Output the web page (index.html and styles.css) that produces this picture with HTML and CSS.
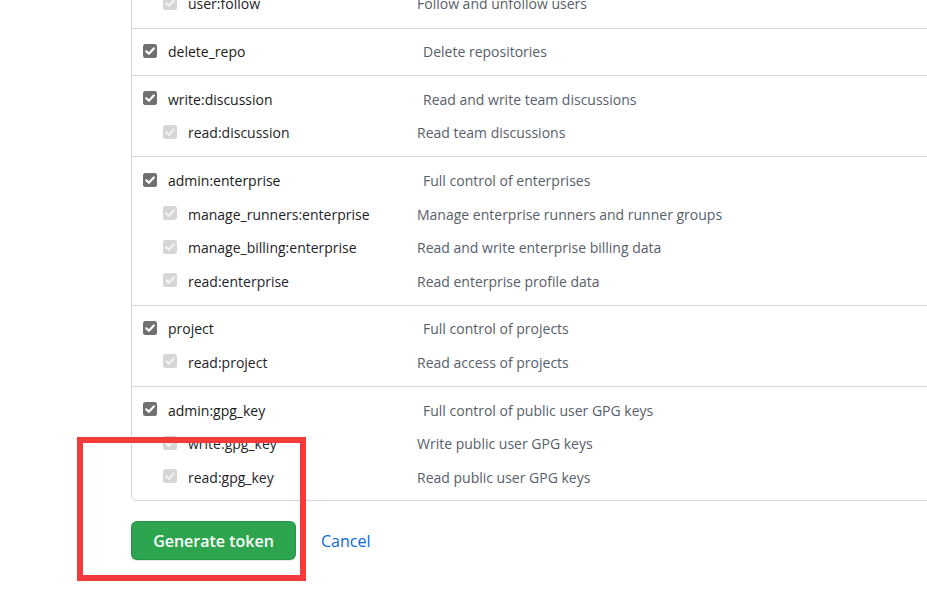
FILE: index.html
```html
<!DOCTYPE html>
<html lang="en">
<head>
<meta charset="utf-8">
<title>Scopes</title>
<link rel="stylesheet" href="styles.css">
</head>
<body>
<div class="page">
  <div class="scopes">
    <div class="group first">
      <div class="row sub"><span class="cb dis"><svg viewBox="0 0 14 14"><path d="M3.3 7.3 L5.9 9.8 L10.8 4.4"/></svg></span><span class="name">user:follow</span><span class="desc">Follow and unfollow users</span></div>
    </div>
    <div class="group">
      <div class="row parent"><span class="cb on"><svg viewBox="0 0 14 14"><path d="M3.3 7.3 L5.9 9.8 L10.8 4.4"/></svg></span><span class="name">delete_repo</span><span class="desc">Delete repositories</span></div>
    </div>
    <div class="group">
      <div class="row parent"><span class="cb on"><svg viewBox="0 0 14 14"><path d="M3.3 7.3 L5.9 9.8 L10.8 4.4"/></svg></span><span class="name">write:discussion</span><span class="desc">Read and write team discussions</span></div>
      <div class="row sub"><span class="cb dis"><svg viewBox="0 0 14 14"><path d="M3.3 7.3 L5.9 9.8 L10.8 4.4"/></svg></span><span class="name">read:discussion</span><span class="desc">Read team discussions</span></div>
    </div>
    <div class="group">
      <div class="row parent"><span class="cb on"><svg viewBox="0 0 14 14"><path d="M3.3 7.3 L5.9 9.8 L10.8 4.4"/></svg></span><span class="name">admin:enterprise</span><span class="desc">Full control of enterprises</span></div>
      <div class="row sub"><span class="cb dis"><svg viewBox="0 0 14 14"><path d="M3.3 7.3 L5.9 9.8 L10.8 4.4"/></svg></span><span class="name">manage_runners:enterprise</span><span class="desc">Manage enterprise runners and runner groups</span></div>
      <div class="row sub"><span class="cb dis"><svg viewBox="0 0 14 14"><path d="M3.3 7.3 L5.9 9.8 L10.8 4.4"/></svg></span><span class="name">manage_billing:enterprise</span><span class="desc">Read and write enterprise billing data</span></div>
      <div class="row sub"><span class="cb dis"><svg viewBox="0 0 14 14"><path d="M3.3 7.3 L5.9 9.8 L10.8 4.4"/></svg></span><span class="name">read:enterprise</span><span class="desc">Read enterprise profile data</span></div>
    </div>
    <div class="group">
      <div class="row parent"><span class="cb on"><svg viewBox="0 0 14 14"><path d="M3.3 7.3 L5.9 9.8 L10.8 4.4"/></svg></span><span class="name">project</span><span class="desc">Full control of projects</span></div>
      <div class="row sub"><span class="cb dis"><svg viewBox="0 0 14 14"><path d="M3.3 7.3 L5.9 9.8 L10.8 4.4"/></svg></span><span class="name">read:project</span><span class="desc">Read access of projects</span></div>
    </div>
    <div class="group">
      <div class="row parent"><span class="cb on"><svg viewBox="0 0 14 14"><path d="M3.3 7.3 L5.9 9.8 L10.8 4.4"/></svg></span><span class="name">admin:gpg_key</span><span class="desc">Full control of public user GPG keys</span></div>
      <div class="row sub"><span class="cb dis"><svg viewBox="0 0 14 14"><path d="M3.3 7.3 L5.9 9.8 L10.8 4.4"/></svg></span><span class="name">write:gpg_key</span><span class="desc">Write public user GPG keys</span></div>
      <div class="row sub"><span class="cb dis"><svg viewBox="0 0 14 14"><path d="M3.3 7.3 L5.9 9.8 L10.8 4.4"/></svg></span><span class="name">read:gpg_key</span><span class="desc">Read public user GPG keys</span></div>
    </div>
  </div>
  <div class="actions">
    <button class="btn-primary" type="button">Generate token</button>
    <a class="cancel" href="#">Cancel</a>
  </div>
  <div class="highlight"></div>
</div>
</body>
</html>
```

FILE: styles.css
```css
html, body {
  margin: 0;
  padding: 0;
  overflow: hidden;
  background: #ffffff;
}
body {
  font-family: "Open Sans", "Noto Sans", sans-serif;
  font-size: 14px;
  color: #24292f;
}
.page {
  position: relative;
  display: flow-root;
  padding-left: 131px;
  height: 591px;
}
.scopes {
  margin-top: -14px;
  width: 1000px;
  border: 1px solid #d0d7de;
  border-radius: 6px;
}
.group {
  padding: 6.5px 0 6.7px;
  border-top: 1px solid #d0d7de;
}
.group.first {
  border-top: 0;
  padding-top: 0;
  padding-bottom: 7px;
}
.row {
  display: flex;
  align-items: center;
  height: 33.5px;
  white-space: nowrap;
}
.cb {
  flex: none;
  width: 14px;
  height: 14px;
  border-radius: 2.5px;
  margin-right: 11px;
  display: block;
  position: relative;
  top: -1px;
}
.cb svg {
  display: block;
  width: 14px;
  height: 14px;
}
.cb path {
  fill: none;
  stroke-width: 2.2;
  stroke-linecap: round;
  stroke-linejoin: round;
}
.cb.on {
  background: #707070;
}
.cb.on path {
  stroke: #ffffff;
}
.cb.dis {
  background: #d6d6d6;
}
.cb.dis path {
  stroke: #f2f2f2;
}
.parent .cb {
  margin-left: 11px;
}
.sub .cb {
  margin-left: 31px;
}
.name {
  flex: none;
  color: #1f2328;
}
.parent .name {
  width: 255px;
  color: #171b20;
}
.sub .name {
  width: 229px;
}
.desc {
  color: #57606a;
}
.actions {
  display: flex;
  align-items: center;
  margin-top: 20px;
  gap: 25px;
}
.btn-primary {
  width: 165px;
  height: 39px;
  border: 1px solid rgba(27, 31, 36, 0.15);
  border-radius: 6px;
  background: #2da44e;
  color: #ffffff;
  font-family: inherit;
  font-size: 16px;
  font-weight: 600;
  padding: 0;
  box-shadow: 0 1px 0 rgba(27, 31, 36, 0.1);
}
.cancel {
  color: #0969da;
  font-size: 16px;
  text-decoration: none;
}
.highlight {
  position: absolute;
  left: 77px;
  top: 437px;
  width: 217px;
  height: 132px;
  border: 6.5px solid #f43a3a;
}
```
